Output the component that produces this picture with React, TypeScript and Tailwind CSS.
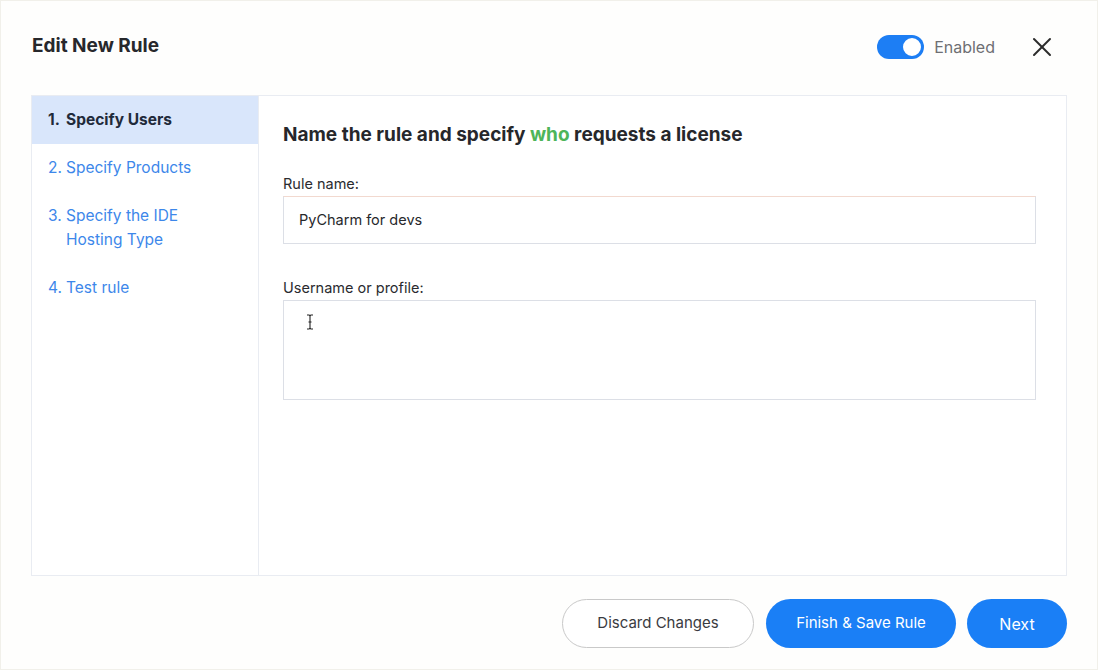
import { X } from "lucide-react";

const steps = [
  { n: "1.", label: "Specify Users", active: true },
  { n: "2.", label: "Specify Products" },
  { n: "3.", label: "Specify the IDE Hosting Type" },
  { n: "4.", label: "Test rule" },
];

function Toggle() {
  return (
    <span className="relative inline-flex h-[24px] w-[47px] items-center rounded-full bg-[#1d7ef4]">
      <span className="absolute right-[1px] size-[22px] rounded-full border-2 border-[#1d7ef4] bg-white" />
    </span>
  );
}

function IBeam() {
  return (
    <svg width="8" height="16" viewBox="0 0 8 16" className="absolute left-[22px] top-[13px]" aria-hidden="true">
      <path d="M1 1h2.2L4 2l.8-1H7M1 15h2.2L4 14l.8 1H7M4 2v12M2.5 8h3" fill="none" stroke="#222" strokeWidth="1.1" />
    </svg>
  );
}

export default function App() {
  return (
    <div className="h-[670px] w-[1098px] border border-[#f1f0ea] bg-[#fefefd] font-['Inter',sans-serif] text-[#27282c]">
      <header className="flex h-[94px] items-center pl-[31px] pr-[39px] pb-[3px]">
        <h1 className="text-[19px] font-bold">Edit New Rule</h1>
        <div className="ml-auto flex items-center gap-[10px]">
          <Toggle />
          <span className="text-[16px] text-[#6e6f73]">Enabled</span>
        </div>
        <button className="ml-[31px] text-[#2b2b2b]" aria-label="Close">
          <X size={32} strokeWidth={1.5} />
        </button>
      </header>

      <section className="mx-[30px] flex h-[481px] border border-[#e9ecf2] bg-white">
        <nav className="w-[227px] shrink-0 border-r border-[#e9ecf2]">
          {steps.map((s) =>
            s.active ? (
              <div key={s.n} className="flex bg-[#d9e6fb] py-[12px] pl-[16px] text-[15.5px] font-bold leading-[24px] text-[#1f2a3a]">
                <span className="w-[18px] shrink-0">{s.n}</span>
                <span>{s.label}</span>
              </div>
            ) : (
              <div key={s.n} className="flex py-[12px] pl-[16px] pr-[40px] text-[15.5px] leading-[24px] text-[#3d87ea]">
                <span className="w-[18px] shrink-0">{s.n}</span>
                <span>{s.label}</span>
              </div>
            )
          )}
        </nav>

        <div className="flex-1 pl-[24px] pr-[30px] pt-[25px]">
          <h2 className="text-[19px] font-bold leading-[28px] text-[#26272b]">
            Name the rule and specify <span className="text-[#4db55a]">who</span> requests a license
          </h2>

          <label className="mt-[25px] block text-[14.5px] leading-[20px] text-[#2a2b2f]">Rule name:</label>
          <div className="mt-[2px] flex h-[48px] items-center border border-[#dcdfe6] border-t-[#f2d9cf] px-[15px] text-[14.5px] text-[#27282c]">
            PyCharm for devs
          </div>

          <label className="mt-[34px] block text-[14.5px] leading-[20px] text-[#2a2b2f]">Username or profile:</label>
          <div className="relative mt-[2px] h-[100px] border border-[#dcdfe6]">
            <IBeam />
          </div>
        </div>
      </section>

      <footer className="flex justify-end pr-[30px] pt-[23px]">
        <button className="h-[49px] w-[192px] rounded-full border border-[#c9c9c9] bg-white text-[15px] text-[#3a3b3f]">
          Discard Changes
        </button>
        <button className="ml-[12px] h-[49px] w-[190px] rounded-full bg-[#1a7ff6] text-[15px] text-white">
          Finish &amp; Save Rule
        </button>
        <button className="ml-[11px] h-[49px] w-[100px] rounded-full bg-[#1a7ff6] text-[16px] text-white">
          Next
        </button>
      </footer>
    </div>
  );
}
